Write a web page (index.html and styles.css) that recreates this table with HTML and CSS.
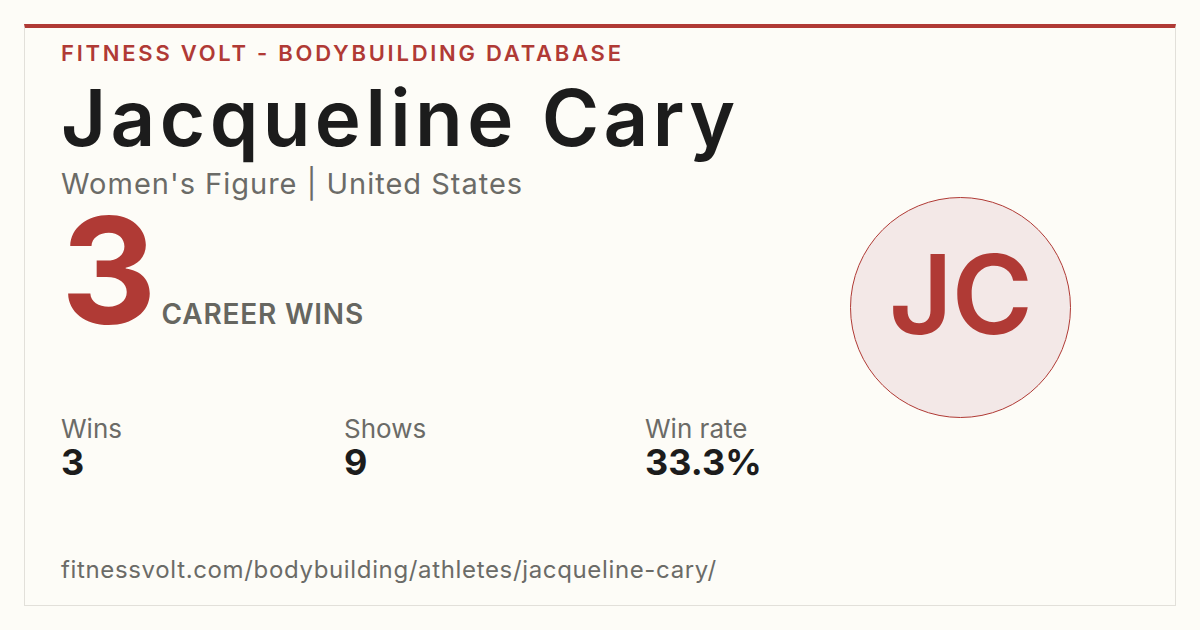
FILE: index.html
```html
<!DOCTYPE html>
<html lang="en">
<head>
<meta charset="utf-8">
<title>Jacqueline Cary - Fitness Volt</title>
<link rel="stylesheet" href="styles.css">
</head>
<body>
<div class="card">
  <div class="main">
    <div class="brand">FITNESS VOLT - BODYBUILDING DATABASE</div>
    <h1 class="name">Jacqueline Cary</h1>
    <div class="meta">Women's Figure | United States</div>
    <div class="hero">
      <span class="hero-num">3</span>
      <span class="hero-label">CAREER WINS</span>
    </div>
    <div class="stats">
      <div class="stat">
        <div class="stat-label">Wins</div>
        <div class="stat-value">3</div>
      </div>
      <div class="stat">
        <div class="stat-label">Shows</div>
        <div class="stat-value">9</div>
      </div>
      <div class="stat">
        <div class="stat-label">Win rate</div>
        <div class="stat-value">33.3%</div>
      </div>
    </div>
    <div class="url">fitnessvolt.com/bodybuilding/athletes/jacqueline-cary/</div>
  </div>
  <div class="side">
    <div class="avatar">JC</div>
  </div>
</div>
</body>
</html>
```
FILE: styles.css
```css
html, body {
  margin: 0;
  padding: 0;
  background: #fdfcf7;
}
body {
  padding: 24px;
  font-family: Inter, "Open Sans", "Liberation Sans", sans-serif;
  color: #1c1c1c;
}
.card {
  box-sizing: border-box;
  height: 582px;
  border: 1px solid #e2e0da;
  border-top: 4px solid #b03a35;
  display: flex;
  padding: 0 36px;
}
.main {
  flex: 1;
  display: flex;
  flex-direction: column;
}
.brand {
  margin-top: 14px;
  font-size: 22px;
  line-height: 1;
  font-weight: 600;
  letter-spacing: 2.75px;
  color: #b03a35;
}
.name {
  margin: 15px 0 0;
  font-size: 78px;
  line-height: 1;
  font-weight: 600;
  letter-spacing: 4.4px;
  color: #1c1c1c;
}
.meta {
  margin-top: 12px;
  font-size: 29px;
  line-height: 1;
  letter-spacing: 1px;
  color: #6b6b67;
}
.hero {
  margin-top: -1px;
  display: flex;
  align-items: baseline;
  gap: 10px;
}
.hero-num {
  font-size: 148px;
  line-height: 1;
  font-weight: 700;
  color: #b03a35;
  letter-spacing: -5px;
}
.hero-label {
  font-size: 28px;
  line-height: 1;
  font-weight: 600;
  color: #666660;
  letter-spacing: 0.8px;
}
.stats {
  margin-top: 71px;
  display: grid;
  grid-template-columns: 283px 301px auto;
}
.stat-label {
  font-size: 26px;
  line-height: 1;
  color: #6b6b67;
}
.stat-value {
  margin-top: 2px;
  font-size: 36px;
  line-height: 1;
  font-weight: 700;
  color: #1c1c1c;
}
.url {
  margin-top: 78px;
  font-size: 24px;
  line-height: 1;
  letter-spacing: 0.65px;
  color: #6b6b67;
}
.side {
  padding-top: 169px;
  padding-right: 68px;
}
.avatar {
  box-sizing: border-box;
  width: 221px;
  height: 221px;
  padding-bottom: 28px;
  border-radius: 50%;
  border: 1px solid #b03a35;
  background: #f3e8e7;
  color: #b03a35;
  display: flex;
  align-items: center;
  justify-content: center;
  font-size: 110px;
  font-weight: 600;
  letter-spacing: -1px;
}
```
